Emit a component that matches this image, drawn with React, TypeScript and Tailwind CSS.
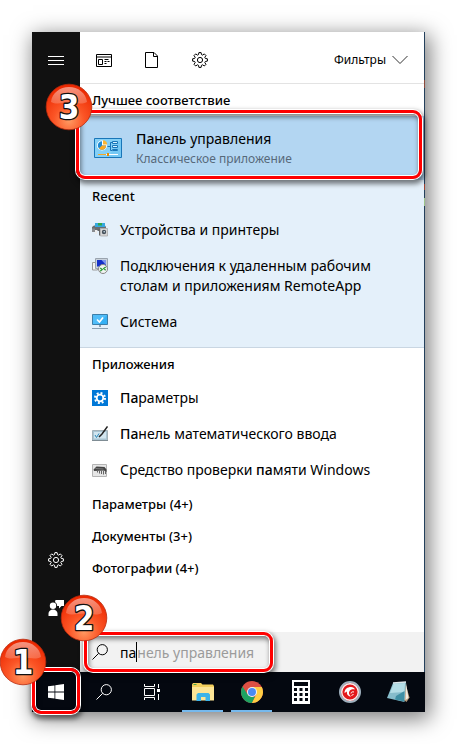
import type { ReactNode } from "react";

type Result = {
  icon: ReactNode;
  text: ReactNode;
};

const recent: Result[] = [
  { icon: <PrinterIcon />, text: "Устройства и принтеры" },
  { icon: <RemoteIcon />, text: "Подключения к удаленным рабочим столам и приложениям RemoteApp" },
  { icon: <MonitorIcon />, text: "Система" },
];

const apps: Result[] = [
  { icon: <SettingsTileIcon />, text: <><Match>Па</Match>раметры</> },
  { icon: <MathInputIcon />, text: <><Match>Па</Match>нель математического ввода</> },
  { icon: <MemoryIcon />, text: <>Средство проверки <Match>па</Match>мяти Windows</> },
];

const groups = ["Параметры (4+)", "Документы (3+)", "Фотографии (4+)"];

export default function App() {
  return (
    <div className="min-h-screen bg-white p-8 font-['Noto_Sans','Open_Sans',sans-serif] text-black">
      <div className="flex min-h-[calc(100vh-64px)] flex-col shadow-[3px_5px_20px_2px_rgba(0,0,0,0.5)]">
        <div className="flex flex-1">
          <Sidebar />

          <main className="flex min-w-0 flex-1 flex-col bg-white">
            <header className="flex h-13 items-start border-b border-[#e3e3e3] pt-1">
              <IconButton label="Приложения"><AppsIcon /></IconButton>
              <IconButton label="Документы"><PageIcon /></IconButton>
              <IconButton label="Параметры"><GearIcon /></IconButton>
              <button className="ml-auto flex h-12 items-center gap-1.5 pr-4 text-[12px]">
                Фильтры
                <svg width="16" height="10" viewBox="0 0 16 10" fill="none" stroke="#333">
                  <path d="M.5 1 8 8.500 15.500 1" />
                </svg>
              </button>
            </header>

            <Heading>Лучшее соответствие</Heading>
            <div className="relative">
              <button className="flex h-16 w-full items-center gap-3.5 bg-[#b3d6f2] pl-3.5 text-left">
                <ControlPanelIcon />
                <span className="flex flex-col pt-0.5">
                  <span className="text-[14px] leading-5"><Match>Па</Match>нель управления</span>
                  <span className="text-[12px] leading-5 text-[#57697a]">Классическое приложение</span>
                </span>
              </button>
              <Frame className="-top-1.5 right-0.5 bottom-px -left-1" />
              <Badge n={3} className="-top-[33px] -left-[35px]" />
            </div>

            <section className="border-b border-[#c9d6e2] bg-[#e4f0fa] pb-[7px]">
              <Heading>Recent</Heading>
              <ResultList items={recent} />
            </section>

            <section>
              <Heading>Приложения</Heading>
              <ResultList items={apps} />
              {groups.map((g) => (
                <Heading key={g}>{g}</Heading>
              ))}
            </section>

            <div className="relative mt-auto">
              <label className="flex h-10 items-center bg-[#f2f2f2] pl-3 text-[14px]">
                <SearchIcon className="mr-3 text-black" />
                <input
                  aria-label="Поиск"
                  defaultValue="па"
                  className="field-sizing-content bg-transparent outline-none"
                />
                <span className="h-5 w-px bg-black" />
                <span className="text-[#9b9b9b]">нель управления</span>
              </label>
              <Frame className="inset-y-0 left-1 w-[189px]" />
              <Badge n={2} className="-top-[38px] -left-5" />
            </div>
          </main>

          {/* sliver of the desktop behind the menu */}
          <div className="flex w-px flex-col bg-[#24405c]">
            <span className="mt-12 h-2 bg-[#8c4a3c]" />
            <span className="mt-24 h-1.5 bg-[#a04434]" />
            <span className="mt-2 h-2 bg-[#9cc48c]" />
          </div>
        </div>

        <Taskbar />
      </div>
    </div>
  );
}

function Sidebar() {
  return (
    <nav className="flex w-12 flex-col bg-[#111] pt-1 pb-10 text-white">
      <IconButton label="Меню">
        <svg width="16" height="9" viewBox="0 0 16 9" stroke="currentColor">
          <path d="M0 .5h16M0 4.500h16M0 8.500h16" />
        </svg>
      </IconButton>
      <div className="mt-auto">
        <IconButton label="Настройки"><GearIcon /></IconButton>
        <IconButton label="Отзывы"><FeedbackIcon /></IconButton>
      </div>
    </nav>
  );
}

function Taskbar() {
  return (
    <footer className="flex h-10 bg-[#040810] text-white">
      <div className="relative">
        <button aria-label="Пуск" className="flex h-10 w-12 items-center justify-center">
          <svg width="16" height="16" viewBox="0 0 16 16" fill="#fff">
            <path d="M0 2.300 6.500 1.400V7.600H0zM7.300 1.300 16 0V7.600H7.300zM0 8.400H6.500V14.600L0 13.700zM7.300 8.400H16V16L7.300 14.700z" />
          </svg>
        </button>
        <Frame className="-top-1 -bottom-0.5 inset-x-0" />
        <Badge n={1} className="-top-[34px] -left-[33px]" />
      </div>
      <button aria-label="Поиск" className="flex w-12 items-center justify-center">
        <SearchIcon />
      </button>
      <button aria-label="Представление задач" className="flex w-12 items-center justify-center">
        <svg width="16" height="16" viewBox="0 0 16 16" fill="none" stroke="#fff">
          <path d="M.5 0v2.500h10V0M.5 16v-2.500h10V16M.5 4.500h10v7H.5zM14.500 0v4M14.500 10v6" />
          <path d="M13 5h3v3h-3z" fill="#fff" stroke="none" />
        </svg>
      </button>
      <div className="ml-0.5 flex">
        <TaskButton label="Проводник" open><ExplorerIcon /></TaskButton>
        <TaskButton label="Chrome" open><ChromeIcon /></TaskButton>
        <TaskButton label="Калькулятор"><CalculatorIcon /></TaskButton>
        <TaskButton label="Антивирус"><GuardIcon /></TaskButton>
        <TaskButton label="Блокнот"><NotepadIcon /></TaskButton>
      </div>
    </footer>
  );
}

function TaskButton({ label, open, children }: { label: string; open?: boolean; children: ReactNode }) {
  return (
    <button aria-label={label} className="relative flex h-10 w-[49px] items-center justify-center">
      {children}
      {open && <span className="absolute inset-x-1 bottom-0 h-0.5 bg-[#76b9ed]" />}
    </button>
  );
}

function IconButton({ label, children }: { label: string; children: ReactNode }) {
  return (
    <button aria-label={label} className="flex h-12 w-12 items-center justify-center">
      {children}
    </button>
  );
}

function Heading({ children }: { children: ReactNode }) {
  return <h2 className="h-8 pl-3 text-[13px] leading-8 font-medium">{children}</h2>;
}

function Match({ children }: { children: ReactNode }) {
  return <span className="font-medium">{children}</span>;
}

function ResultList({ items }: { items: Result[] }) {
  return (
    <ul>
      {items.map((item, i) => (
        <li key={i}>
          <button className="flex w-full gap-3 py-2 pr-11 pl-3 text-left text-[14px] leading-5">
            <span className="mt-0.5 shrink-0">{item.icon}</span>
            <span>{item.text}</span>
          </button>
        </li>
      ))}
    </ul>
  );
}

function Frame({ className }: { className: string }) {
  return (
    <div
      className={`pointer-events-none absolute z-10 rounded-[9px] border-3 border-[#f00] shadow-[0_0_0_1px_#fff,inset_0_0_0_1px_#fff,1px_3px_5px_2px_rgba(0,0,0,0.5),inset_1px_3px_5px_1px_rgba(0,0,0,0.5)] ${className}`}
    />
  );
}

function Badge({ n, className }: { n: number; className: string }) {
  return (
    <svg width="48" height="48" viewBox="0 0 48 48" className={`pointer-events-none absolute z-20 ${className}`}>
      <defs>
        <radialGradient id={`ball${n}`} cx="0.5" cy="0.8" r="0.75">
          <stop offset="0" stopColor="#ff9a62" />
          <stop offset="0.45" stopColor="#fb5526" />
          <stop offset="1" stopColor="#ec2800" />
        </radialGradient>
        <linearGradient id={`gloss${n}`} x2="0" y2="1">
          <stop offset="0" stopColor="#fff" stopOpacity="0.5" />
          <stop offset="1" stopColor="#fff" stopOpacity="0.2" />
        </linearGradient>
      </defs>
      <circle cx="24" cy="24" r="22.800" fill={`url(#ball${n})`} stroke="#b8290c" strokeWidth="0.800" />
      <path d="M6 19C7 10 15 4 24 4S41 10 42 19C36 22 31 19.500 24 19.500S12 22 6 19z" fill={`url(#gloss${n})`} />
      <text
        x="24"
        y="35.500"
        textAnchor="middle"
        fontSize="33"
        fontWeight="700"
        fill="#fff"
        stroke="#111"
        strokeWidth="2.600"
        paintOrder="stroke"
        strokeLinejoin="round"
        className="font-['DejaVu_Sans_Condensed','DejaVu_Sans',sans-serif]"
      >
        {n}
      </text>
    </svg>
  );
}

function SearchIcon({ className = "" }: { className?: string }) {
  return (
    <svg width="16" height="16" viewBox="0 0 16 16" fill="none" stroke="currentColor" className={className}>
      <circle cx="10.300" cy="5.700" r="5.100" />
      <path d="M6.700 9.300.5 15.500" />
    </svg>
  );
}

function AppsIcon() {
  return (
    <svg width="16" height="13" viewBox="0 0 16 13" fill="none" stroke="#000">
      <path d="M.5.500h15v12H.5zM.5 3h15" />
      <path d="M2.500 5.500h4v5h-4zM8.500 5.500h4M8.500 7.500h2M8.500 9.500h2M11.500 7.500h2" />
    </svg>
  );
}

function PageIcon() {
  return (
    <svg width="14" height="16" viewBox="0 0 14 16" fill="none" stroke="#000">
      <path d="M.5.500h8.500l3.500 3.500v11.500H.5zM8.500.500v4h4" />
    </svg>
  );
}

function GearIcon() {
  return (
    <svg width="16" height="16" viewBox="0 0 16 16" fill="none" stroke="currentColor">
      <path d="M6.900.6h2.200l.4 2 1.100.5 1.700-1.200 1.700 1.700-1.200 1.700.5 1.100 2.100.4v2.300l-2.100.4-.5 1.100 1.200 1.700-1.700 1.700-1.700-1.200-1.100.5-.4 2.100H6.900l-.4-2.100-1.100-.5-1.700 1.200L2 12.300l1.200-1.700-.5-1.100-2.100-.4V6.800l2.100-.4.500-1.100L2 3.600l1.700-1.700 1.700 1.200 1.100-.5z" />
      <circle cx="8" cy="8" r="2.600" />
    </svg>
  );
}

function FeedbackIcon() {
  return (
    <svg width="16" height="16" viewBox="0 0 16 16" fill="currentColor">
      <circle cx="5" cy="5.800" r="3.200" />
      <path d="M.5 16v-2.500a4.500 4 0 0 1 9 0V16zM7.500 0H16v6h-2.500L11 8.500V6H9.200A4.500 4.500 0 0 0 7 2z" />
    </svg>
  );
}

function ControlPanelIcon() {
  return (
    <svg width="28" height="20" viewBox="0 0 28 20">
      <path d="M.5.500h27v19H.5z" fill="#74c8f4" stroke="#1976b8" />
      <path d="M1 1h26L14 19H1z" fill="#94d8f8" opacity="0.500" />
      <circle cx="8" cy="7.500" r="5" fill="#fff" />
      <path d="M8 7.500V3.300a4.200 4.200 0 1 0 4.200 4.200z" fill="#1c8ad6" />
      <path d="M8 7.500h4.200A4.200 4.200 0 0 1 5 10.500z" fill="#f7a823" />
      <path d="M9 6.500V2.300a4.200 4.200 0 0 1 4.200 4.200z" fill="#f9b533" />
      <path d="M13.500 8.500h3M16.500 4.500v8M16.500 4.500H18M16.500 12.500H18" stroke="#1976b8" fill="none" />
      <path d="M18.500 3.500h5v2h-5zM18.500 7.500h5v2h-5zM18.500 11.500h5v1h-5z" fill="#d8f2ff" stroke="#1976b8" />
      <path d="M4 16.500h20" stroke="#fff" />
      <path d="M4 16.500h8" stroke="#f7a823" />
      <path d="M13 15h2v3h-2z" fill="#e88b00" />
    </svg>
  );
}

function PrinterIcon() {
  return (
    <svg width="16" height="16" viewBox="0 0 16 16">
      <path d="M3 1h10v4H3z" fill="#35a7e0" />
      <path d="M6 1h4v2.500H6z" fill="#30a84a" />
      <path d="M0 5 2 3.500h1V5h10V3.500l1 1.500v1.500H8V8H0z" fill="#6a6d70" />
      <path d="M0 6.500h3V10H0z" fill="#8a8d90" />
      <path d="M3 8h2v4H3z" fill="#eee" />
      <path d="M5.500 7H8v6.500H7V9H5.500z" fill="#666" />
      <path d="M8.500 6.500h7v7.500h-7z" fill="#d8d8d8" stroke="#a4a4a4" strokeWidth="0.700" />
      <circle cx="12" cy="10" r="2.200" fill="#46515b" />
      <circle cx="12.200" cy="9.700" r="0.800" fill="#cfe4f2" />
    </svg>
  );
}

function RemoteIcon() {
  return (
    <svg width="16" height="16" viewBox="0 0 16 16">
      <path d="M.5 4.500h5V12h-5z" fill="#f4f4f4" stroke="#999" />
      <path d="M3.500.500h12v10h-12z" fill="#c9d2dc" stroke="#9aa4ae" />
      <path d="M5 2h9v6.500H5z" fill="#1430c8" />
      <path d="M9.500 2H14v5z" fill="#7c94ee" />
      <circle cx="11" cy="11" r="4.500" fill="#f2f4f2" stroke="#888" />
      <path d="m8.200 10 2 1.500-2 1.700M13.700 9l-2 1.500 2 1.700" fill="none" stroke="#2c9c38" strokeWidth="1.300" />
    </svg>
  );
}

function MonitorIcon() {
  return (
    <svg width="16" height="16" viewBox="0 0 16 16">
      <path d="M.5.500h15v10h-15z" fill="#35b0f4" stroke="#3c7ea8" />
      <path d="M1 1h14L6 10H1z" fill="#62c6fa" opacity="0.600" />
      <path d="m5 5.500 2.500 2.500L11 3.500" fill="none" stroke="#fff" strokeWidth="1.600" />
      <path d="M7 11h2v2H7z" fill="#8fa2b0" />
      <path d="M0 14.500h16" stroke="#8ba0b2" />
    </svg>
  );
}

function SettingsTileIcon() {
  return (
    <svg width="16" height="16" viewBox="0 0 16 16">
      <path d="M0 0h16v16H0z" fill="#0078d7" />
      <circle cx="8" cy="8" r="3.300" fill="none" stroke="#fff" strokeWidth="1.800" />
      <circle cx="8" cy="8" r="5" fill="none" stroke="#fff" strokeWidth="2" strokeDasharray="1.960 1.960" />
    </svg>
  );
}

function MathInputIcon() {
  return (
    <svg width="16" height="16" viewBox="0 0 16 16">
      <path d="M.5 4.500h15v10H.5z" fill="#a9c4d2" stroke="#a3b1b8" />
      <path d="M2 6h12v6.500H2z" fill="#d2e6f0" />
      <path d="M0 14.500h16" stroke="#7f8c94" />
      <path d="m3 9 1.500 2.500L7 7.500" fill="none" stroke="#2a88b8" />
      <path d="M15.500.500 10 8l-3 3" fill="none" stroke="#222" strokeWidth="1.500" />
    </svg>
  );
}

function MemoryIcon() {
  return (
    <svg width="16" height="16" viewBox="0 0 16 16">
      <path d="M.5 2.500h14v12H.5z" fill="#e6e6e6" stroke="#b4b4b4" />
      <path d="m1.500 7.500 3-3 8 .5 2 2.500V10L12 8.500 2 9z" fill="#444" />
      <path d="M5.500 8.500v2M7.500 8.500v3M9.500 8.500v3.500M11.500 8.500v4M13.500 9v3" stroke="#666" />
      <path d="m3.500 6.500 8 .5" stroke="#8c8c8c" strokeWidth="0.800" />
    </svg>
  );
}

function ExplorerIcon() {
  return (
    <svg width="22" height="18" viewBox="0 0 22 18">
      <path d="M0 1.500 1 0h8l1.500 1.500H21L22 3v14H0z" fill="#f3cf5d" />
      <path d="M1.500 1h3v1h-3z" fill="#4ca64c" />
      <path d="M0 4h22v13.500H0z" fill="#fde596" />
      <path d="M4.500 18v-6.500L6 10h10.500l1.500 1.500V18h-4.500v-4H9v4z" fill="#3cb4ea" />
    </svg>
  );
}

function ChromeIcon() {
  return (
    <svg width="22" height="22" viewBox="0 0 22 22">
      <circle cx="11" cy="11" r="11" fill="#dd5044" />
      <path d="M11 6h9.800A11 11 0 0 1 10.800 22L15.300 13.500z" fill="#ffce44" />
      <path d="M1.500 5.500 6.700 13.500 11 16l3-.5L10.800 22A11 11 0 0 1 1.500 5.500z" fill="#1da362" />
      <circle cx="11" cy="11" r="5" fill="#f4f4f4" />
      <circle cx="11" cy="11" r="4" fill="#4a8af4" />
    </svg>
  );
}

function CalculatorIcon() {
  return (
    <svg width="18" height="24" viewBox="0 0 18 24">
      <path d="M0 0h18v24H0z" fill="#fff" />
      <path d="M2 2h14v4H2z" fill="#040810" />
      <path d="M2 9.500h14M2 14.500h14M2 19.500h14" stroke="#040810" strokeWidth="3" strokeDasharray="3 2.500" />
    </svg>
  );
}

function GuardIcon() {
  return (
    <svg width="22" height="22" viewBox="0 0 22 22">
      <circle cx="11" cy="11" r="10" fill="#e3171b" stroke="#9fb0be" strokeWidth="2" />
      <circle cx="11" cy="11" r="8.300" fill="none" stroke="#f2f2f2" strokeWidth="1.400" />
      <path d="M5.500 12c0-4 3-6 6.500-6 2 0 3.500 1 4 2.500-2.500-.5-4.500 0-5.500 1.500-1.200 2-.3 4 1.500 5.500-3 0-4.500-2.500-4-5z" fill="#fff" />
      <path d="M12 12.500c0-1.500 1.500-2 3-1.500M13 15c-.5-1 .5-1.500 1.500-1.500" fill="none" stroke="#fff" />
    </svg>
  );
}

function NotepadIcon() {
  return (
    <svg width="23" height="22" viewBox="0 0 23 22">
      <path d="m18 1 4.500 15.500-3 4.500-2.500-2z" fill="#b89a78" />
      <path d="m19 2 2.500 15-3 2z" fill="#f2ece2" />
      <path d="M6 2 19 1l-1.500 20L0 17z" fill="#86bccb" />
      <path d="M6.500 3 18 2l-.7 9L3 12z" fill="#b4dde6" />
      <path d="m9 15 8.500-5-.5 10.500L8 18.500z" fill="#3f8fa4" />
      <path d="m6 2 13-1" stroke="#dde6ea" strokeWidth="1.500" />
    </svg>
  );
}
